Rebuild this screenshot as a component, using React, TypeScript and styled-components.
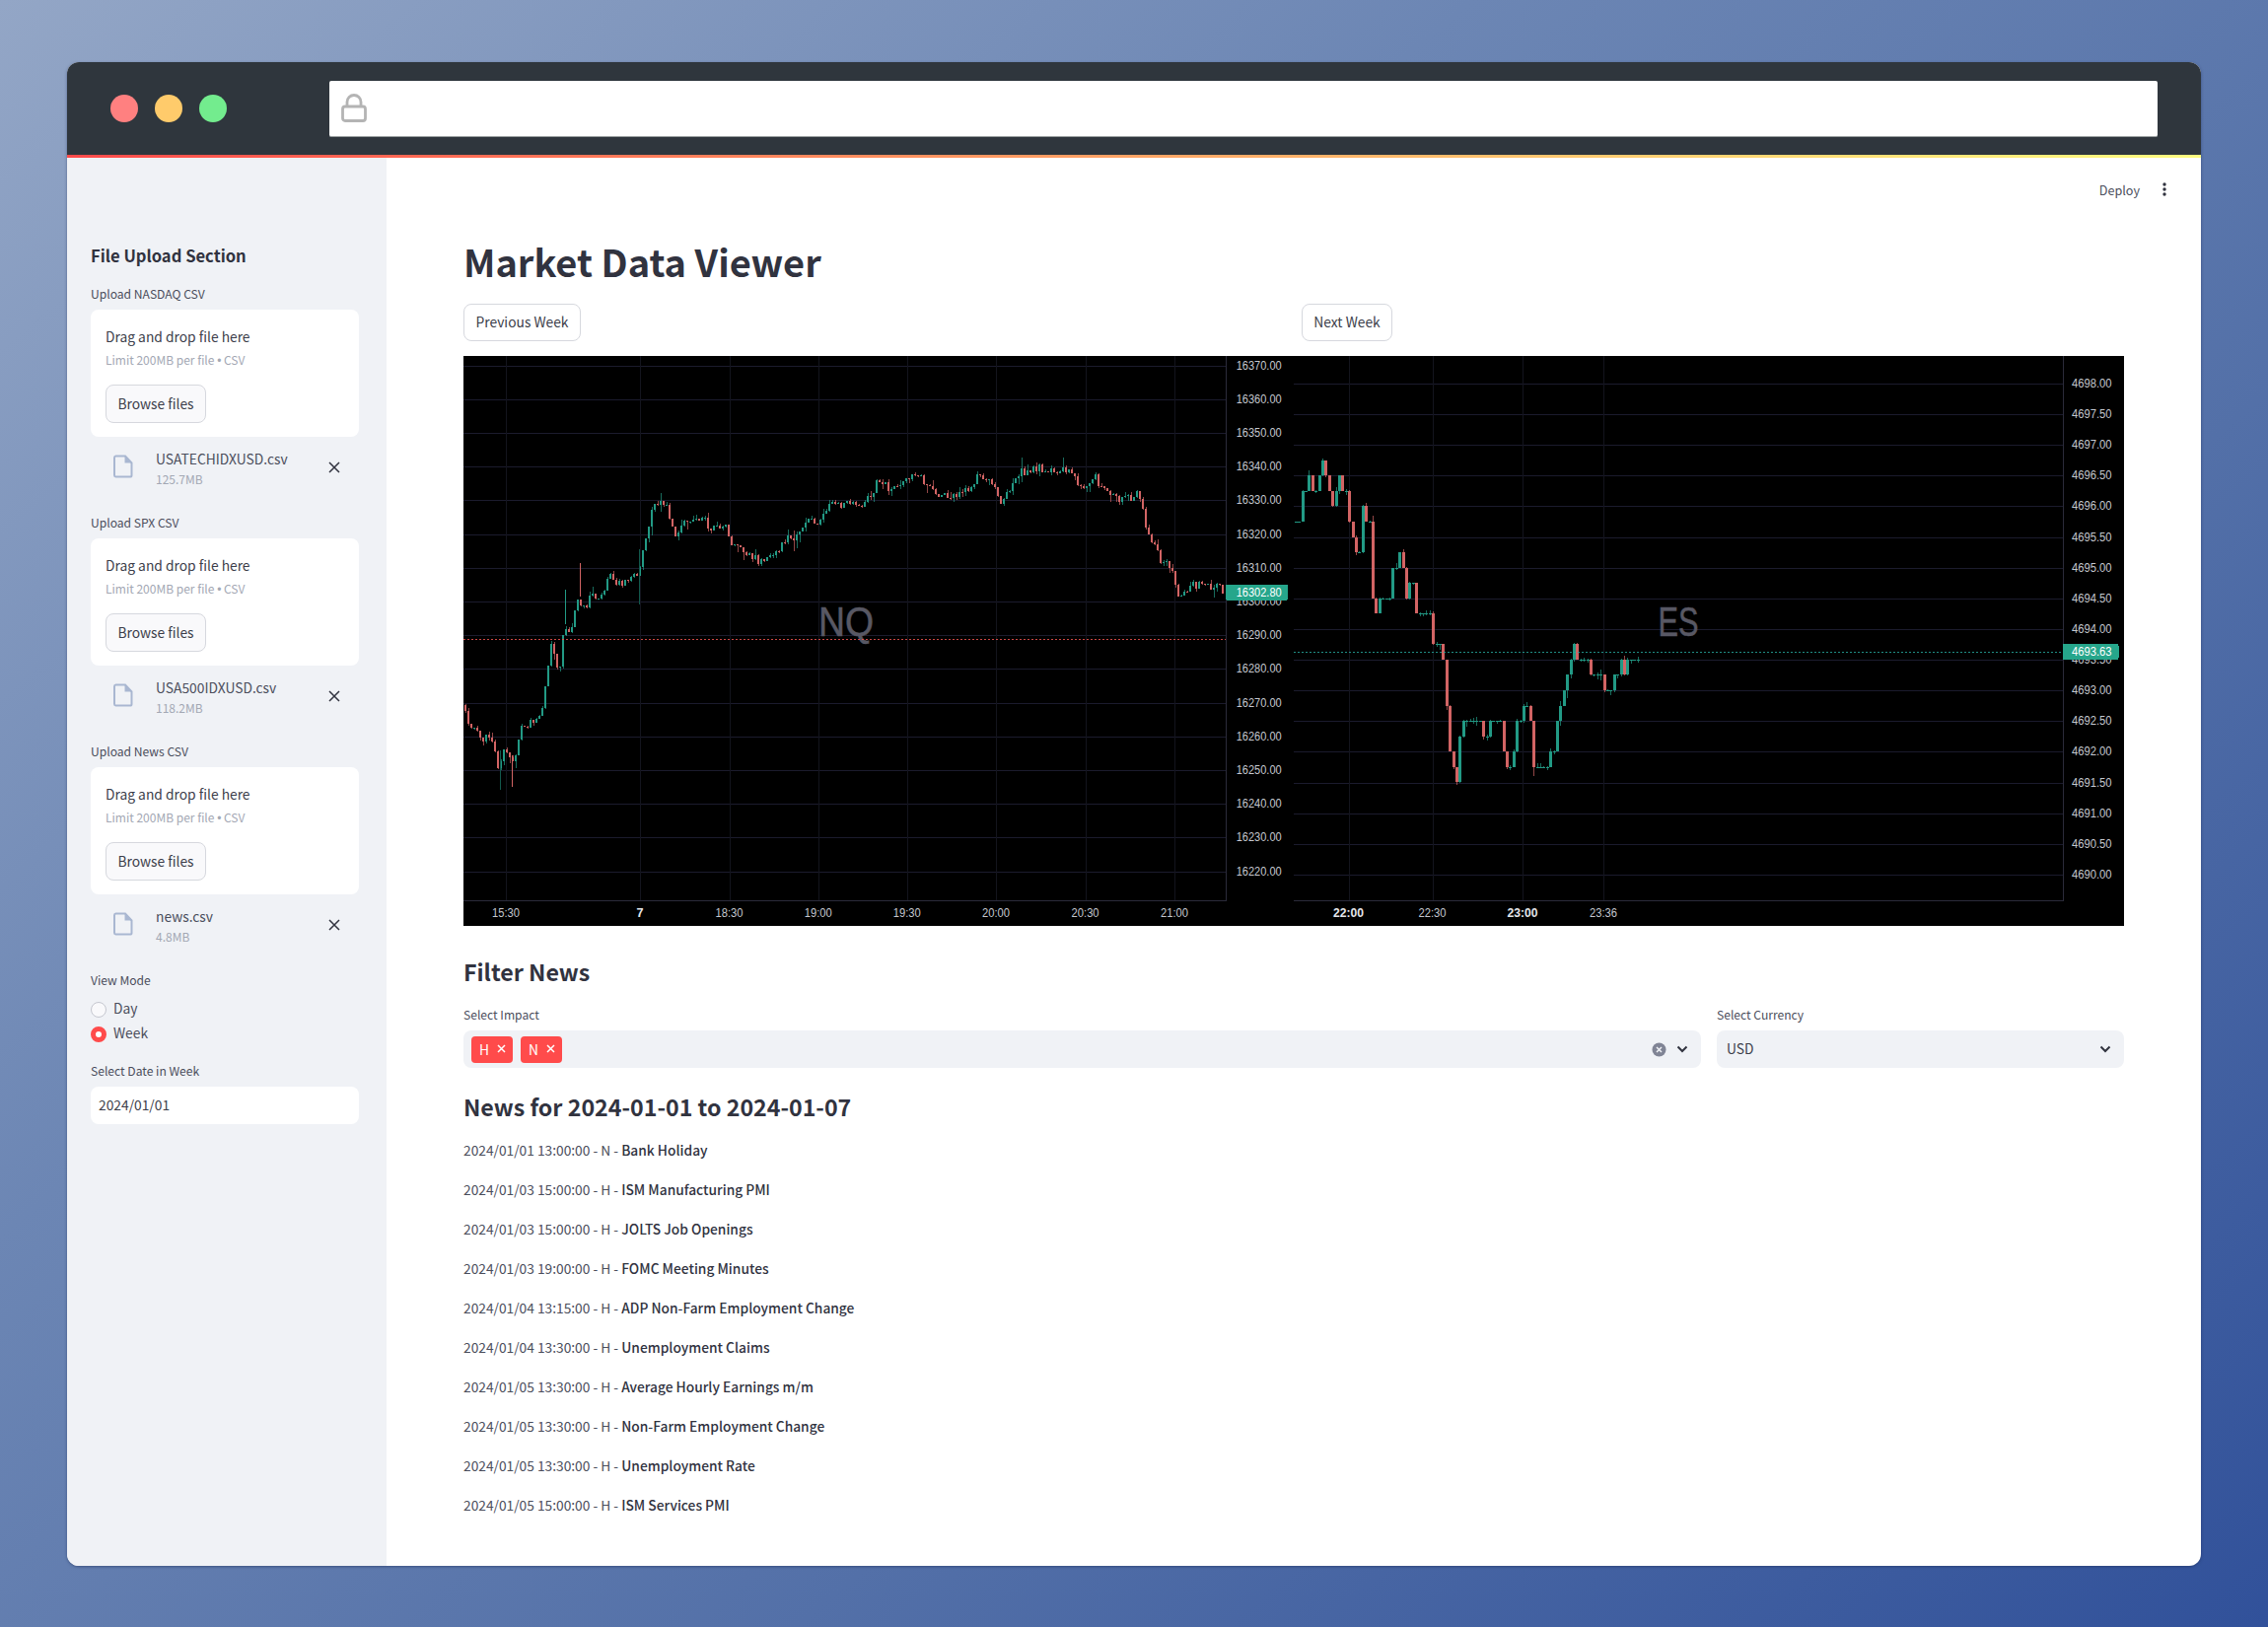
import React from "react";
import styled, { createGlobalStyle } from "styled-components";

const FONT = `"Noto Sans CJK SC", "Noto Sans", sans-serif`;

const Global = createGlobalStyle`
  html, body { margin: 0; padding: 0; background: #5a76aa; }
  * { box-sizing: border-box; }
`;

const Page = styled.div`
  width: 2300px;
  height: 1650px;
  padding: 63px 68px 62px;
  background: linear-gradient(140deg, #93a6c6 0%, #6c86b4 35%, #5370a8 65%, #31519a 100%);
  font-family: ${FONT};
  color: #31333f;
`;
const Window = styled.div`
  display: flex;
  flex-direction: column;
  height: 1525px;
  border-radius: 12px;
  overflow: hidden;
  background: #fff;
  box-shadow: 0 1px 3px rgba(30, 45, 90, 0.55);
`;
const TitleBar = styled.div`
  flex: none;
  display: flex;
  align-items: center;
  height: 94px;
  padding: 0 44px 0 44px;
  background: #2f363d;
`;
const Light = styled.span<{ $c: string }>`
  width: 28px;
  height: 28px;
  margin-right: 17px;
  border-radius: 50%;
  background: ${(p) => p.$c};
`;
const UrlBar = styled.div`
  flex: 1;
  display: flex;
  align-items: center;
  height: 57px;
  margin-left: 87px;
  padding-left: 12px;
  background: #fff;
  border-radius: 2px;
  border-bottom: 1px solid #9aa0a0;
`;
const Stripe = styled.div`
  flex: none;
  height: 3px;
  background: linear-gradient(90deg, #ff4b4b, #fffd80);
`;
const Body = styled.div`
  flex: 1;
  display: flex;
  min-height: 0;
`;
const Sidebar = styled.aside`
  flex: none;
  width: 324px;
  padding: 85px 28px 0 24px;
  background: #f0f2f6;
`;
const SideTitle = styled.h2`
  margin: 0 0 17px;
  font-size: 16.6px;
  line-height: 28px;
  font-weight: 600;
`;
const SmallLabel = styled.div`
  font-size: 12.1px;
  line-height: 16px;
  color: #4b4e5c;
`;
const Dropzone = styled.div`
  margin-top: 8px;
  height: 129px;
  padding: 17px 15px 15px;
  background: #fff;
  border-radius: 8px;
`;
const DropTitle = styled.div`
  font-size: 13.8px;
  line-height: 20px;
  color: #3c3e4a;
`;
const DropHint = styled.div`
  margin: 6px 0 16px;
  font-size: 12px;
  line-height: 16px;
  color: #a3a8b4;
`;
const Bullet = styled.span`
  font-family: "Liberation Sans", sans-serif;
`;
const Btn = styled.button<{ $w: number }>`
  display: block;
  width: ${(p) => p.$w}px;
  height: 38px;
  padding: 0 0 2px;
  border: 1px solid #d6d8de;
  border-radius: 8px;
  background: #fff;
  font-family: ${FONT};
  font-size: 13.8px;
  line-height: 20px;
  color: #3c3e4a;
`;
const BrowseBtn = styled(Btn)`
  height: 39px;
  background: #f9f9fb;
`;
const FileRow = styled.div`
  display: flex;
  align-items: flex-start;
  height: 79px;
  padding: 12px 19px 0 23px;
`;
const FileText = styled.div`
  margin-left: 23px;
  flex: 1;
`;
const FileName = styled.div`
  font-size: 13.8px;
  line-height: 20px;
  color: #4b4e5c;
`;
const FileSize = styled.div`
  margin-top: 1px;
  font-size: 12px;
  line-height: 20px;
  color: #a3a8b4;
`;
const FileIconSvg = styled.svg`
  margin-top: 6px;
  flex: none;
`;
const CloseSvg = styled.svg`
  margin-top: 13px;
  flex: none;
`;
const RadioList = styled.div`
  margin-top: 10px;
  display: flex;
  flex-direction: column;
  gap: 5px;
`;
const RadioRow = styled.div`
  display: flex;
  align-items: center;
  gap: 7px;
  font-size: 13.8px;
  line-height: 20px;
  color: #4b4e5c;
`;
const RadioDot = styled.span<{ $on?: boolean }>`
  width: 16px;
  height: 16px;
  margin-top: 3px;
  border-radius: 50%;
  background: ${(p) => (p.$on ? "#fff" : "#f9f9fb")};
  border: ${(p) => (p.$on ? "5px solid #ff4b4b" : "1px solid #c5c7cf")};
`;
const DateLabel = styled(SmallLabel)`
  margin-top: 21px;
`;
const DateInput = styled.div`
  display: flex;
  align-items: center;
  margin-top: 8px;
  height: 38px;
  padding: 0 0 2px 8px;
  background: #fff;
  border-radius: 8px;
  font-size: 13.8px;
  color: #3c3e4a;
`;
const Main = styled.main`
  flex: 1;
  min-width: 0;
  padding: 0 78px;
`;
const Toolbar = styled.div`
  display: flex;
  align-items: center;
  justify-content: flex-end;
  gap: 23px;
  height: 64px;
  margin-right: -43px;
  font-size: 12.6px;
  color: #4b4e5c;
`;
const Title = styled.h1`
  display: flex;
  align-items: center;
  height: 84px;
  padding-bottom: 4px;
  margin: 0;
  font-size: 38px;
  font-weight: 700;
  color: #31333f;
`;
const ButtonGrid = styled.div`
  display: grid;
  grid-template-columns: 834px 834px;
  gap: 16px;
  margin-bottom: 15px;
`;
const ChartRow = styled.div`
  display: flex;
  height: 578px;
  background: #000;
`;
const ChartSvg = styled.svg`
  display: block;
  flex: none;
  shape-rendering: crispEdges;
  font-family: "Liberation Sans", sans-serif;
`;
const AxisText = styled.text`
  font-size: 12.5px;
  fill: #c4c7cf;
  dominant-baseline: central;
  shape-rendering: auto;
`;
const TimeText = styled(AxisText)<{ $bold?: boolean }>`
  text-anchor: middle;
  font-weight: ${(p) => (p.$bold ? 700 : 400)};
  fill: ${(p) => (p.$bold ? "#e4e6ea" : "#c4c7cf")};
`;
const LastText = styled(AxisText)`
  fill: #fff;
`;
const Watermark = styled.text`
  font-size: 42px;
  fill: #585864;
  stroke: #585864;
  stroke-width: 0.6px;
  text-anchor: middle;
  shape-rendering: auto;
`;
const H3 = styled.h3<{ $top: number }>`
  margin: ${(p) => p.$top}px 0 0;
  font-size: 23.2px;
  line-height: 40px;
  height: 40px;
  font-weight: 600;
`;
const FilterGrid = styled.div`
  display: grid;
  grid-template-columns: 1255px 413px;
  gap: 16px;
  margin-top: 14px;
`;
const FieldLabel = styled.div`
  font-size: 12.1px;
  line-height: 20px;
  color: #4b4e5c;
`;
const Select = styled.div`
  display: flex;
  align-items: center;
  gap: 8px;
  height: 38px;
  margin-top: 6px;
  padding: 0 13px 0 8px;
  background: #f0f2f6;
  border-radius: 8px;
  font-size: 13.8px;
  color: #3c3e4a;
`;
const Tag = styled.span`
  display: flex;
  align-items: center;
  gap: 8px;
  height: 27px;
  padding: 0 7px 1px 8px;
  background: #ff4b4b;
  border-radius: 4px;
  color: #fff;
  font-size: 13.8px;
`;
const Spacer = styled.span`
  flex: 1;
`;
const CurrencyText = styled.span`
  flex: 1;
  padding: 0 0 2px 2px;
`;
const NewsList = styled.div`
  display: flex;
  flex-direction: column;
  gap: 20px;
  margin-top: 14px;
`;
const NewsRow = styled.div`
  font-size: 13.75px;
  line-height: 20px;
  color: #4b4e5c;
`;
const NewsStrong = styled.strong`
  font-weight: 500;
  color: #31333f;
`;
const ClearSvg = styled.svg`
  margin-right: 2px;
`;

/* ---------- chart data ---------- */
const rng = (seed: number) => () => {
  seed = (seed * 1664525 + 1013904223) % 4294967296;
  return seed / 4294967296;
};
type P = [number, number];
const at = (pts: P[], x: number) => {
  for (let i = 1; i < pts.length; i++) {
    if (x <= pts[i][0]) {
      const [a, b] = [pts[i - 1], pts[i]];
      return a[1] + ((b[1] - a[1]) * (x - a[0])) / (b[0] - a[0]);
    }
  }
  return pts[pts.length - 1][1];
};
const n1: number[][] = [[17,960],[30,1010],[50,1040],[70,1040],[85,1130],[95,1060],[110,1110],[125,1020],[145,1000],[160,980],[172,900],[180,790],[195,880],[205,730],[215,770],[230,670],[245,700],[255,650],[270,680],[290,610],[305,630],[340,610],[350,560],[360,480],[372,415],[395,430],[410,510],[430,470],[458,450],[475,495],[500,475],[515,520],[530,545],[570,575],[590,565],[610,520],[635,510],[650,465],[670,470],[700,425],[750,425],[775,395],[785,350],[810,385],[860,345],[885,390],[915,405],[945,390],[970,345],[990,365],[1015,415],[1050,335],[1080,325],[1100,335],[1135,330],[1165,390],[1185,340],[1200,385],[1235,410],[1265,395],[1280,470],[1295,530],[1310,580],[1330,590],[1340,675],[1370,635],[1420,640],[1425,670]];
const n2: number[][] = [[25,480],[35,420],[52,320],[60,400],[75,320],[90,440],[102,370],[115,365],[128,480],[140,600],[150,420],[162,480],[165,650],[175,750],[180,650],[195,710],[205,600],[218,555],[230,650],[245,610],[250,750],[260,700],[273,690],[280,800],[295,780],[305,1000],[310,1090],[322,1170],[330,1020],[345,1000],[370,1020],[400,980],[410,1090],[420,1130],[435,1000],[455,940],[465,1130],[480,1135],[500,1060],[510,980],[525,900],[530,820],[555,815],[570,850],[585,890],[600,930],[610,900],[625,855],[650,830],[662,810]];
const path1: P[] = n1.map(([x, y]) => [x / 1.823 - 10, y / 2.613 - 11]);
const path2: P[] = n2.map(([x, y]) => [x / 1.823 - 12, y / 2.613 - 11]);

interface Candle { x: number; top: number; h: number; wt: number; wb: number; up: boolean; }
const makeCandles = (pts: P[], step: number, jitter: number, wick: number, seed: number, snap: number, y0: number) => {
  const r = rng(seed);
  const out: Candle[] = [];
  const s = (v: number) => (snap ? y0 + Math.round((v - y0) / snap) * snap : v);
  const start = pts[0][0];
  const end = pts[pts.length - 1][0];
  let prev = s(pts[0][1]);
  for (let x = start; x <= end; x += step) {
    const close = s(at(pts, x) + (r() - 0.5) * jitter);
    const top = Math.min(prev, close);
    const h = Math.max(1, Math.abs(prev - close));
    const wt = top - r() * r() * r() * wick;
    const wb = top + h + r() * r() * r() * wick;
    out.push({ x: Math.round(x), top, h, wt, wb, up: close <= prev });
    prev = close;
  }
  return out;
};
const C1 = makeCandles(path1, 3, 9, 14, 7, 0, 0);
const C2 = makeCandles(path2, 3.4, 12, 10, 11, 15.55, 28);

const UP = "#229a85";
const DOWN = "#d26464";

/* the few long wicks of the NQ chart that stand out from the generated series */
const spikes1: { x: number; y1: number; y2: number; c: string }[] = [
  { x: 118, y1: 210, y2: 244, c: DOWN },
  { x: 103, y1: 237, y2: 272, c: UP },
  { x: 178, y1: 196, y2: 252, c: "#12584c" },
  { x: 37, y1: 400, y2: 440, c: "#12584c" },
  { x: 49, y1: 405, y2: 437, c: DOWN },
];

const prices1 = Array.from({ length: 16 }, (_, i) => ({ y: 9.7 + i * 34.19, t: (16370 - i * 10).toFixed(2) }));
const prices2 = Array.from({ length: 17 }, (_, i) => ({ y: 28 + i * 31.12, t: (4698 - i * 0.5).toFixed(2) }));
const times1 = [
  { x: 43, t: "15:30", w: 28 },
  { x: 179, t: "7", w: 7, b: true },
  { x: 269.5, t: "18:30", w: 28 },
  { x: 359.7, t: "19:00", w: 28 },
  { x: 449.7, t: "19:30", w: 28 },
  { x: 540, t: "20:00", w: 28 },
  { x: 630.6, t: "20:30", w: 28 },
  { x: 721, t: "21:00", w: 28 },
];
const times2 = [
  { x: 55.5, t: "22:00", w: 31, b: true },
  { x: 140.5, t: "22:30", w: 28 },
  { x: 232, t: "23:00", w: 31, b: true },
  { x: 314, t: "23:36", w: 28 },
];

interface PaneProps {
  axisX: number;
  labelX: number;
  labelW: number;
  prices: { y: number; t: string }[];
  times: { x: number; t: string; w: number; b?: boolean }[];
  candles: Candle[];
  spikes?: { x: number; y1: number; y2: number; c: string }[];
  bodyW: number;
  mark: string;
  markX: number;
  markW: number;
  lineY: number;
  lineColor: string;
  last: string;
  lastY: number;
  lastW: number;
}
const Pane = (p: PaneProps) => (
  <ChartSvg width={842} height={578} viewBox="0 0 842 578">
    {p.prices.map((g) => (
      <rect key={g.t} x={0} y={Math.round(g.y)} width={p.axisX} height={1} fill="#1b1b2d" />
    ))}
    {p.times.map((g) => (
      <rect key={g.t} x={Math.round(g.x)} y={0} width={1} height={552} fill="#13141d" />
    ))}
    <Watermark x={p.markX} y={284} textLength={p.markW} lengthAdjust="spacingAndGlyphs">{p.mark}</Watermark>
    {p.candles.map((c, i) => (
      <g key={i} fill={c.up ? UP : DOWN}>
        <rect x={c.x} y={c.wt} width={1} height={c.wb - c.wt} opacity={0.7} />
        <rect x={c.x - Math.floor(p.bodyW / 2)} y={c.top} width={p.bodyW} height={c.h} />
      </g>
    ))}
    {(p.spikes || []).map((s) => (
      <rect key={s.x} x={s.x} y={s.y1} width={1} height={s.y2 - s.y1} fill={s.c} />
    ))}
    <line x1={0} x2={p.axisX} y1={p.lineY} y2={p.lineY} stroke={p.lineColor} strokeDasharray="2 2" opacity={0.85} />
    <rect x={p.axisX} y={0} width={1} height={552} fill="#2b2b3a" />
    <rect x={0} y={552} width={p.axisX + 1} height={1} fill="#2b2b3a" />
    {p.prices.map((g) => (
      <AxisText key={g.t} x={p.labelX} y={g.y} textLength={p.labelW} lengthAdjust="spacingAndGlyphs">{g.t}</AxisText>
    ))}
    <rect x={p.axisX} y={p.lastY - 8} width={p.lastW} height={16} rx={2} fill="#26a68b" />
    <LastText x={p.labelX} y={p.lastY} textLength={p.labelW} lengthAdjust="spacingAndGlyphs">{p.last}</LastText>
    {p.times.map((g) => (
      <TimeText key={g.t} $bold={g.b} x={g.x} y={565} textLength={g.w} lengthAdjust="spacingAndGlyphs">{g.t}</TimeText>
    ))}
  </ChartSvg>
);

/* ---------- icons ---------- */
const LockIcon = () => (
  <svg width="26" height="29" viewBox="0 0 26 29" fill="none" stroke="#b4b4b4" strokeWidth="2.8">
    <rect x="1.5" y="13" width="23" height="14.5" rx="2.5" />
    <path d="M6 13V8.5a7 7 0 0 1 14 0V13" />
  </svg>
);
const FileIcon = () => (
  <FileIconSvg width="20" height="24" viewBox="0 0 20 24">
    <path d="M2.5 1.5h9.5l6.5 7v12.5a1.6 1.6 0 0 1-1.6 1.6H2.5A1.6 1.6 0 0 1 1 21V3a1.6 1.6 0 0 1 1.5-1.5z" fill="none" stroke="#a9b7d1" strokeWidth="2" />
    <path d="M11.5 1.5l7 7h-7z" fill="#a9b7d1" />
  </FileIconSvg>
);
const CloseIcon = () => (
  <CloseSvg width="12" height="12" viewBox="0 0 12 12" stroke="#31333f" strokeWidth="1.5">
    <path d="M1 1l10 10M11 1L1 11" />
  </CloseSvg>
);
const TagX = () => (
  <svg width="9" height="9" viewBox="0 0 9 9" stroke="#fff" strokeWidth="1.5"><path d="M1 1l7 7M8 1L1 8" /></svg>
);
const ClearIcon = () => (
  <ClearSvg width="15" height="15" viewBox="0 0 15 15">
    <circle cx="7.5" cy="7.5" r="7" fill="#808495" />
    <path d="M5 5l5 5M10 5l-5 5" stroke="#f0f2f6" strokeWidth="1.5" />
  </ClearSvg>
);
const Chevron = () => (
  <svg width="12" height="8" viewBox="0 0 12 8" fill="none" stroke="#31333f" strokeWidth="2"><path d="M1.5 1.5L6 6l4.5-4.5" /></svg>
);
const Kebab = () => (
  <svg width="4" height="14" viewBox="0 0 4 14" fill="#31333f">
    <circle cx="2" cy="2" r="1.7" /><circle cx="2" cy="7" r="1.7" /><circle cx="2" cy="12" r="1.7" />
  </svg>
);

const uploads = [
  { label: "Upload NASDAQ CSV", file: "USATECHIDXUSD.csv", size: "125.7MB" },
  { label: "Upload SPX CSV", file: "USA500IDXUSD.csv", size: "118.2MB" },
  { label: "Upload News CSV", file: "news.csv", size: "4.8MB" },
];
const news = [
  ["2024/01/01 13:00:00 - N - ", "Bank Holiday"],
  ["2024/01/03 15:00:00 - H - ", "ISM Manufacturing PMI"],
  ["2024/01/03 15:00:00 - H - ", "JOLTS Job Openings"],
  ["2024/01/03 19:00:00 - H - ", "FOMC Meeting Minutes"],
  ["2024/01/04 13:15:00 - H - ", "ADP Non-Farm Employment Change"],
  ["2024/01/04 13:30:00 - H - ", "Unemployment Claims"],
  ["2024/01/05 13:30:00 - H - ", "Average Hourly Earnings m/m"],
  ["2024/01/05 13:30:00 - H - ", "Non-Farm Employment Change"],
  ["2024/01/05 13:30:00 - H - ", "Unemployment Rate"],
  ["2024/01/05 15:00:00 - H - ", "ISM Services PMI"],
];

export default function App() {
  return (
    <Page>
      <Global />
      <Window>
        <TitleBar>
          <Light $c="#ff8080" />
          <Light $c="#ffcb6b" />
          <Light $c="#73ec8e" />
          <UrlBar><LockIcon /></UrlBar>
        </TitleBar>
        <Stripe />
        <Body>
          <Sidebar>
            <SideTitle>File Upload Section</SideTitle>
            {uploads.map((u) => (
              <div key={u.label}>
                <SmallLabel>{u.label}</SmallLabel>
                <Dropzone>
                  <DropTitle>Drag and drop file here</DropTitle>
                  <DropHint>Limit 200MB per file <Bullet>•</Bullet> CSV</DropHint>
                  <BrowseBtn $w={102}>Browse files</BrowseBtn>
                </Dropzone>
                <FileRow>
                  <FileIcon />
                  <FileText>
                    <FileName>{u.file}</FileName>
                    <FileSize>{u.size}</FileSize>
                  </FileText>
                  <CloseIcon />
                </FileRow>
              </div>
            ))}
            <SmallLabel>View Mode</SmallLabel>
            <RadioList>
              <RadioRow><RadioDot />Day</RadioRow>
              <RadioRow><RadioDot $on />Week</RadioRow>
            </RadioList>
            <DateLabel>Select Date in Week</DateLabel>
            <DateInput>2024/01/01</DateInput>
          </Sidebar>
          <Main>
            <Toolbar>Deploy<Kebab /></Toolbar>
            <Title>Market Data Viewer</Title>
            <ButtonGrid>
              <Btn $w={119}>Previous Week</Btn>
              <Btn $w={92}>Next Week</Btn>
            </ButtonGrid>
            <ChartRow>
              <Pane axisX={773} labelX={783.7} labelW={46} prices={prices1} times={times1} candles={C1} spikes={spikes1} bodyW={2}
                mark="NQ" markX={388} markW={56} lineY={287} lineColor="#ef5350"
                last="16302.80" lastY={239.7} lastW={63} />
              <Pane axisX={779.5} labelX={789} labelW={40.6} prices={prices2} times={times2} candles={C2} bodyW={3}
                mark="ES" markX={390} markW={41} lineY={300} lineColor="#26a69a"
                last="4693.63" lastY={300} lastW={57} />
            </ChartRow>
            <H3 $top={26}>Filter News</H3>
            <FilterGrid>
              <div>
                <FieldLabel>Select Impact</FieldLabel>
                <Select>
                  <Tag>H<TagX /></Tag>
                  <Tag>N<TagX /></Tag>
                  <Spacer />
                  <ClearIcon />
                  <Chevron />
                </Select>
              </div>
              <div>
                <FieldLabel>Select Currency</FieldLabel>
                <Select>
                  <CurrencyText>USD</CurrencyText>
                  <Chevron />
                </Select>
              </div>
            </FilterGrid>
            <H3 $top={19}>News for 2024-01-01 to 2024-01-07</H3>
            <NewsList>
              {news.map(([a, b], i) => (
                <NewsRow key={i}>{a}<NewsStrong>{b}</NewsStrong></NewsRow>
              ))}
            </NewsList>
          </Main>
        </Body>
      </Window>
    </Page>
  );
}
